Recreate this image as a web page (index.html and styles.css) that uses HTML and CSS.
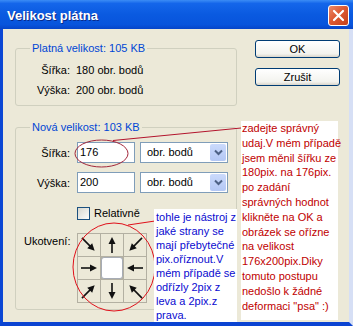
FILE: index.html
```html
<!DOCTYPE html>
<html lang="cs">
<head>
  <meta charset="UTF-8">
  <title>Velikost plátna</title>
  <link rel="stylesheet" href="styles.css">
</head>
<body>

<div class="window">
  <div class="titlebar">
    <span class="title">Velikost plátna</span>
    <span class="close">
      <svg width="13" height="13" viewBox="0 0 13 13">
        <path d="M2 2 L11 11 M11 2 L2 11" stroke="#fff" stroke-width="2.2" stroke-linecap="round"/>
      </svg>
    </span>
  </div>

  <div class="frame">
    <div class="main">
      <!-- Current size -->
      <fieldset class="group current">
        <legend>Platná velikost: 105 KB</legend>
        <div class="info">
          <span class="label">Šířka:</span><span>180 obr. bodů</span>
          <span class="label">Výška:</span><span>200 obr. bodů</span>
        </div>
      </fieldset>

      <!-- New size -->
      <fieldset class="group new">
        <legend>Nová velikost: 103 KB</legend>
        <div class="form">
          <span class="label">Šířka:</span>
          <div class="field">
            <span class="input">176</span>
            <span class="select">
              <span class="select-text">obr. bodů</span>
              <span class="select-btn">
                <svg width="9" height="7" viewBox="0 0 9 7"><path d="M1 1.5 L4.5 5 L8 1.5" fill="none" stroke="#4d6185" stroke-width="2"/></svg>
              </span>
            </span>
          </div>

          <span class="label">Výška:</span>
          <div class="field">
            <span class="input">200</span>
            <span class="select">
              <span class="select-text">obr. bodů</span>
              <span class="select-btn">
                <svg width="9" height="7" viewBox="0 0 9 7"><path d="M1 1.5 L4.5 5 L8 1.5" fill="none" stroke="#4d6185" stroke-width="2"/></svg>
              </span>
            </span>
          </div>

          <span></span>
          <div class="check"><span class="box"></span>Relativně</div>

          <span class="label anchor-label">Ukotvení:</span>
          <div class="anchor">
            <span class="cell"><svg class="arrow r45" viewBox="0 0 22 22"><path d="M1 11 H14"/><polygon points="12,7.5 19,11 12,14.5"/></svg></span>
            <span class="cell"><svg class="arrow r270" viewBox="0 0 22 22"><path d="M3 11 H14"/><polygon points="12,7.5 19,11 12,14.5"/></svg></span>
            <span class="cell"><svg class="arrow r135" viewBox="0 0 22 22"><path d="M1 11 H14"/><polygon points="12,7.5 19,11 12,14.5"/></svg></span>
            <span class="cell"><svg class="arrow" viewBox="0 0 22 22"><path d="M3 11 H14"/><polygon points="12,7.5 19,11 12,14.5"/></svg></span>
            <span class="cell center"></span>
            <span class="cell"><svg class="arrow r180" viewBox="0 0 22 22"><path d="M3 11 H14"/><polygon points="12,7.5 19,11 12,14.5"/></svg></span>
            <span class="cell"><svg class="arrow r315" viewBox="0 0 22 22"><path d="M1 11 H14"/><polygon points="12,7.5 19,11 12,14.5"/></svg></span>
            <span class="cell"><svg class="arrow r90" viewBox="0 0 22 22"><path d="M3 11 H14"/><polygon points="12,7.5 19,11 12,14.5"/></svg></span>
            <span class="cell"><svg class="arrow r225" viewBox="0 0 22 22"><path d="M1 11 H14"/><polygon points="12,7.5 19,11 12,14.5"/></svg></span>
          </div>
        </div>
      </fieldset>
    </div>

    <div class="buttons">
      <button class="btn">OK</button>
      <button class="btn">Zrušit</button>
    </div>
  </div>

  <!-- Annotations drawn over the dialog -->
  <svg class="marks" width="353" height="326" viewBox="0 0 353 326">
    <ellipse cx="101.5" cy="153.5" rx="26.5" ry="13.5" fill="none" stroke="#a3263a" stroke-width="1"/>
    <line x1="113" y1="140.5" x2="241" y2="128" stroke="#b3142c" stroke-width="1"/>
    <ellipse cx="114" cy="267" rx="41" ry="44" fill="none" stroke="#e0101a" stroke-width="1"/>
    <line x1="128" y1="225" x2="155" y2="221" stroke="#e0101a" stroke-width="1"/>
  </svg>

  <div class="note note-red">
    zadejte správný<br>
    udaj.V mém případě<br>
    jsem měnil šířku ze<br>
    180pix. na 176pix.<br>
    po zadání<br>
    správných hodnot<br>
    klikněte na OK a<br>
    obrázek se ořízne<br>
    na velikost<br>
    176x200pix.Diky<br>
    tomuto postupu<br>
    nedošlo k žádné<br>
    deformaci "psa" :)
  </div>

  <div class="note note-blue">
    tohle je nástroj z<br>
    jaké strany se<br>
    mají přebytečné<br>
    pix.oříznout.V<br>
    mém případě se<br>
    odřízly 2pix z<br>
    leva a 2pix.z<br>
    prava.
  </div>
</div>

</body>
</html>
```

FILE: styles.css
```css
/* Windows XP style dialog */
body {
  margin: 0;
  font-family: "Liberation Sans", Arial, sans-serif;
  font-size: 11px;
  color: #000;
}

.window {
  position: relative;
  width: 353px;
  height: 326px;
  overflow: hidden;
  background-color: #ece9d8;
}

.titlebar {
  display: flex;
  align-items: center;
  justify-content: space-between;
  height: 29px;
  padding: 0 4px 0 7px;
  box-sizing: border-box;
  background: linear-gradient(#3b8cf5 0%, #1466ea 12%, #0a5ae0 50%, #0854dc 85%, #0645c8 100%);
}

.title {
  color: #fff;
  font-size: 13px;
  font-weight: bold;
  text-shadow: 1px 1px 0 #0a2a8a;
  margin-top: 2px;
}

.close {
  display: flex;
  align-items: center;
  justify-content: center;
  width: 19px;
  height: 19px;
  margin-top: 2px;
  border: 1px solid #fff;
  border-radius: 3px;
  background: linear-gradient(135deg, #ec8a6a 0%, #dd5a34 45%, #c4401a 100%);
}

.frame {
  display: flex;
  gap: 18px;
  height: 297px;
  box-sizing: border-box;
  padding-left: 12px;
  border-left: 3px solid #0b47d4;
  border-right: 4px solid #d6dff5;
  border-bottom: 4px solid #0b44d2;
}

.main {
  width: 222px;
  padding-top: 12px;
}

.group {
  margin: 0;
  min-width: 0;
  width: 222px;
  box-sizing: border-box;
  padding: 5px 0 5px 8px;
  border: 1px solid #d0d0bf;
  border-radius: 3px;
}

.group legend {
  margin-left: 6px;
  padding: 0 2px;
  line-height: 14px;
  color: #0046d5;
}

.group.new {
  margin-top: 14px;
  padding-top: 8px;
  padding-bottom: 6px;
}

.label {
  text-align: right;
  white-space: nowrap;
}

.info {
  display: grid;
  grid-template-columns: 46px auto;
  column-gap: 6px;
  line-height: 20px;
}

.form {
  display: grid;
  grid-template-columns: 46px auto;
  grid-template-rows: 21px 21px 22px 70px;
  column-gap: 7px;
  row-gap: 9px;
  align-items: center;
}

.anchor-label {
  align-self: start;
  margin-top: 2px;
}

.field {
  display: flex;
  gap: 5px;
}

.input {
  width: 58px;
  height: 21px;
  box-sizing: border-box;
  padding-left: 2px;
  line-height: 19px;
  border: 1px solid #7f9db9;
  background-color: #fff;
}

.select {
  display: flex;
  width: 88px;
  height: 21px;
  box-sizing: border-box;
  border: 1px solid #7f9db9;
  background-color: #fff;
}

.select-text {
  flex: 1;
  padding-left: 6px;
  line-height: 19px;
}

.select-btn {
  display: flex;
  align-items: center;
  justify-content: center;
  width: 16px;
  margin: 1px;
  border-radius: 2px;
  background: linear-gradient(#cbdafc, #b3c7f4);
}

.check {
  display: flex;
  align-items: center;
  gap: 4px;
}

.box {
  width: 11px;
  height: 11px;
  border: 1px solid #1c5180;
  background: linear-gradient(135deg, #d8d8d0, #fdfdfb);
}

.anchor {
  display: grid;
  grid-template-columns: repeat(3, 22px);
  grid-template-rows: repeat(3, 22px);
  gap: 1px;
  width: 70px;
  height: 70px;
  box-sizing: border-box;
  padding: 1px;
  background-color: #b3b0a2;
}

.cell {
  background-color: #ece9d8;
}

.cell.center {
  background-color: #fff;
  border: 1px solid #a7acb5;
  border-radius: 3px;
}

.arrow {
  display: block;
  width: 22px;
  height: 22px;
}

.arrow path {
  stroke: #111;
  stroke-width: 1.6;
}

.arrow polygon {
  fill: #111;
}

.r45 { transform: rotate(45deg); }
.r90 { transform: rotate(90deg); }
.r135 { transform: rotate(135deg); }
.r180 { transform: rotate(180deg); }
.r225 { transform: rotate(225deg); }
.r270 { transform: rotate(270deg); }
.r315 { transform: rotate(315deg); }

.buttons {
  display: flex;
  flex-direction: column;
  gap: 10px;
  padding-top: 11px;
}

.btn {
  width: 85px;
  height: 18px;
  padding: 0;
  border: 1px solid #003c74;
  border-radius: 3px;
  background: linear-gradient(#ffffff, #f3f3ee 80%, #d9d5ca);
  font-family: "Liberation Sans", Arial, sans-serif;
  font-size: 11px;
  color: #000;
}

/* annotations */
.marks {
  position: absolute;
  top: 0;
  left: 0;
  pointer-events: none;
}

.note {
  position: absolute;
  box-sizing: border-box;
  background-color: #fff;
  white-space: nowrap;
}

.note-red {
  left: 241px;
  top: 121px;
  width: 97px;
  height: 199px;
  padding-left: 1px;
  line-height: 14.8px;
  color: #c00000;
}

.note-blue {
  left: 154px;
  top: 209px;
  width: 83px;
  height: 113px;
  padding: 1px 0 0 2px;
  line-height: 14px;
  color: #0a0ad0;
}
```
